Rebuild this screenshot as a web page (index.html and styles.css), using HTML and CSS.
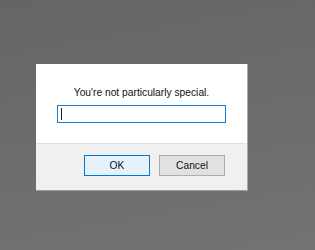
FILE: index.html
```html
<!DOCTYPE html>
<html>
<head>
<meta charset="utf-8">
<link rel="stylesheet" href="styles.css">
</head>
<body>
<div class="screen">
  <div class="dialog">
    <div class="dialog-body">
      <p class="message">You're not particularly special.</p>
      <div class="field"><span class="caret"></span></div>
    </div>
    <div class="dialog-footer">
      <button class="btn btn-primary">OK</button>
      <button class="btn">Cancel</button>
    </div>
  </div>
</div>
</body>
</html>
```
FILE: styles.css
```css
html, body {
  margin: 0;
  padding: 0;
}
body {
  width: 315px;
  height: 250px;
  overflow: hidden;
  font-family: "Liberation Sans", Arial, sans-serif;
}
.screen {
  box-sizing: border-box;
  width: 315px;
  height: 250px;
  padding: 64px 0 0 36px;
  background: linear-gradient(170deg, #646566 0%, #6b6c6c 50%, #737373 100%);
}
.dialog {
  width: 211px;
  background: #fff;
  border-right: 1px solid #a9a9a9;
  border-bottom: 1px solid #9c9c9c;
}
.dialog-body {
  padding: 21px 0 20px;
  border-bottom: 1px solid #dfdfdf;
  display: flex;
  flex-direction: column;
  align-items: center;
}
.message {
  margin: 0 0 5px;
  font-size: 10.25px;
  line-height: 15px;
  color: #111;
  text-align: center;
}
.field {
  box-sizing: border-box;
  width: 169px;
  height: 18px;
  margin-left: -1px;
  border: 1px solid #1a7fd4;
  background: #fff;
  display: flex;
  align-items: center;
  padding-left: 3px;
}
.caret {
  width: 1px;
  height: 12px;
  background: #222;
}
.dialog-footer {
  height: 46px;
  background: #f0f0f0;
  display: flex;
  justify-content: flex-end;
  align-items: flex-start;
  gap: 9px;
  padding: 11px 22px 0 0;
  box-sizing: border-box;
}
.btn {
  box-sizing: border-box;
  width: 66px;
  height: 21px;
  margin: 0;
  padding: 0;
  font-family: "Liberation Sans", Arial, sans-serif;
  font-size: 10.25px;
  color: #111;
  background: #e1e1e1;
  border: 1px solid #adadad;
  border-radius: 0;
}
.btn-primary {
  background: #e5f1fb;
  border-color: #0078d7;
}
```
